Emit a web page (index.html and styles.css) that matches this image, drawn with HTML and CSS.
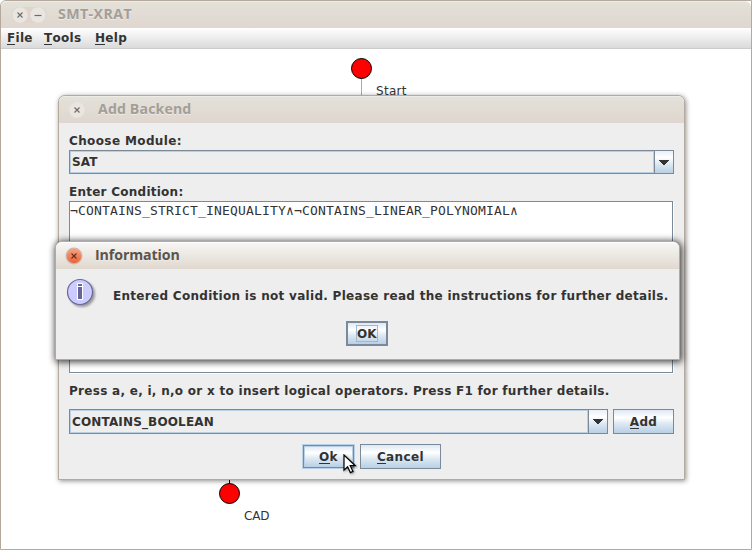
FILE: index.html
```html
<!DOCTYPE html>
<html lang="en">
<head>
<meta charset="utf-8">
<title>SMT-XRAT</title>
<link rel="stylesheet" href="styles.css">
</head>
<body>
<main class="window main-window">
  <header class="titlebar">
    <span class="window-controls">
      <svg class="control" viewBox="0 0 16 16"><circle cx="8" cy="8" r="7.7"/><path d="M5.5 5.5l5 5m0-5l-5 5"/></svg>
      <svg class="control" viewBox="0 0 16 16"><circle cx="8" cy="8" r="7.7"/><path d="M4.5 8.5h7"/></svg>
    </span>
    <span class="title title-main">SMT-XRAT</span>
  </header>
  <nav class="menubar"><span class="m-file"><u>F</u>ile</span><span class="m-tools"><u>T</u>ools</span><span class="m-help"><u>H</u>elp</span></nav>
  <section class="canvas">
    <svg class="graph" viewBox="0 0 750 500">
      <path class="edge" d="M360.5 29v30"/>
      <path class="arrow" d="M227 430h3v1h-1v4h-1v-4h-1z"/>
      <circle cx="360.5" cy="19.5" r="10"/>
      <circle cx="228.5" cy="444.5" r="10"/>
    </svg>
    <span class="node-label start">Start</span>
    <span class="node-label cad">CAD</span>
  </section>
</main>

<section class="window backend-dialog">
  <header class="titlebar">
    <svg class="control" viewBox="0 0 16 16"><circle cx="8" cy="8" r="7.7"/><path d="M5.5 5.5l5 5m0-5l-5 5"/></svg>
    <span class="title title-backend">Add Backend</span>
  </header>
  <div class="form">
    <div class="label t-module">Choose Module:</div>
    <div class="combo module-combo"><span class="value">SAT</span><span class="drop"><svg viewBox="0 0 10 5"><path d="M0 0h10v1h-1v1h-1v1h-1v1h-1v1h-2v-1h-1v-1h-1v-1h-1v-1h-1z"/></svg></span></div>
    <div class="label condition-label">Enter Condition:</div>
    <div class="textarea">¬CONTAINS_STRICT_INEQUALITY∧¬CONTAINS_LINEAR_POLYNOMIAL∧</div>
    <div class="label hint">Press a, e, i, n,o or x to insert logical operators. Press F1 for further details.</div>
    <div class="row">
      <div class="combo operand-combo"><span class="value">CONTAINS_BOOLEAN</span><span class="drop"><svg viewBox="0 0 10 5"><path d="M0 0h10v1h-1v1h-1v1h-1v1h-1v1h-2v-1h-1v-1h-1v-1h-1v-1h-1z"/></svg></span></div>
      <div class="button add"><span><u>A</u>dd</span></div>
    </div>
    <div class="actions">
      <div class="button accept"><span><u>O</u>k</span></div>
      <div class="button cancel"><span><u>C</u>ancel</span></div>
    </div>
  </div>
</section>

<section class="window info-dialog">
  <header class="titlebar">
    <svg class="control close" viewBox="0 0 18 18"><defs><linearGradient id="orange" x2="0" y2="1"><stop stop-color="#f8a080"/><stop offset="1" stop-color="#ea6435"/></linearGradient></defs><circle class="ring" cx="9" cy="9" r="8.5"/><circle class="face" cx="9" cy="9" r="7.2"/><path d="M6.5 6.5l5 5m0-5l-5 5"/></svg>
    <span class="title title-info">Information</span>
  </header>
  <div class="message">
    <svg class="info-icon" viewBox="0 0 32 32"><circle class="info-disc" cx="14" cy="14" r="12.5"/><path class="info-edge" d="M11 5h6v17h-6z"/><path class="info-i" d="M12 6h4v2h-4zM12 9h4v12h-4z"/></svg>
    <span class="message-text">Entered Condition is not valid. Please read the instructions for further details.</span>
  </div>
  <div class="button confirm"><span class="focus">OK</span></div>
</section>
<svg class="cursor" viewBox="0 0 14 20"><path d="M1 1v15.2l3.6-3.5 2.8 5.9 2.6-1.2-2.8-5.7h5.1z"/></svg>
</body>
</html>
```
FILE: styles.css
```css
* { box-sizing: border-box; }
body {
  margin: 0; width: 752px; height: 550px; overflow: hidden; background: #fff;
  font: bold 12px/16px "DejaVu Sans", sans-serif; letter-spacing: .285px; color: #333;
}
span { white-space: nowrap; }
svg { display: block; flex: none; }
u { text-decoration: none; border-bottom: 1px solid #333; display: inline-block; height: 15px; }

.window { position: absolute; border: 1px solid #b5a99d; background: #eee; }
.titlebar {
  display: flex; align-items: center; height: 27px; border-top: 1px solid #eeece6;
  border-radius: 6px 6px 0 0; background: linear-gradient(#e3e1d9, #dfd6cf);
}
.title { margin-top: -2px; font: bold 14.2px/18px "Open Sans", "Noto Sans", sans-serif; letter-spacing: 0; color: #a39e98; text-shadow: 0 1px #eeeae5; }
.control { width: 16px; height: 16px; fill: #e9e6e1; }
.control path { fill: none; stroke: #716c67; stroke-width: 1.2; }

.main-window { inset: 0; background: #fff; border-radius: 6px 0 0 0; }
.window-controls { display: flex; gap: 2px; margin-left: 10px; padding: 0 1px; border-radius: 9px; background: #dfd5cc; }
.title-main { margin-left: 11px; letter-spacing: .4px; }
.menubar { display: flex; height: 21px; padding: 2px 0 0 6px; border-bottom: 1px solid #ccc; background: linear-gradient(#fff, #dadada); }
.m-file { width: 37px; } .m-tools { width: 51px; }
.canvas { position: relative; height: 499px; }
.graph { width: 750px; height: 500px; }
.graph circle { fill: red; stroke: #000; }
.edge { stroke: #aaa; }
.arrow { fill: #000; }
.node-label { position: absolute; font: 12px/14px "DejaVu Sans", sans-serif; }
.start { left: 375px; top: 35px; }
.cad { left: 243px; top: 460px; letter-spacing: -.2px; }

.backend-dialog { left: 58px; top: 95px; width: 627px; height: 385px; border-radius: 7px 7px 0 0; box-shadow: 1px 1px 5px rgba(0,0,0,.45); }
.backend-dialog .titlebar .control { margin-left: 10px; }
.title-backend { margin-left: 13px; letter-spacing: .1px; }
.form { display: flex; flex-direction: column; padding: 10px 10px 0; }
.label { height: 16px; margin-bottom: 1px; white-space: nowrap; }
.t-module { letter-spacing: .38px; }
.combo { display: flex; border: 1px solid #7a8a99; letter-spacing: .15px; }
.module-combo { height: 24px; }
.value { flex: 1; display: flex; align-items: center; padding-left: 1px; border: 1px solid #b8cfe5; }
.drop { width: 19px; display: flex; align-items: center; justify-content: center; border-left: 1px solid #7a8a99; background: linear-gradient(#e8f0f7, #fff 30%, #dce8f2 60%, #b8cfe5); }
.drop svg { width: 10px; height: 5px; fill: #333; }
.condition-label { margin-top: 10px; letter-spacing: .25px; }
.textarea { width: 604px; height: 172px; padding: 1px 0; border: 1px solid #7a8a99; background: #fff; font: 13px/16px "DejaVu Sans Mono", monospace; letter-spacing: .173px; box-shadow: 1px 1px #fff; }
.hint { margin: 10px 0; }
.row { display: flex; gap: 5px; height: 25px; }
.operand-combo { width: 539px; }
.button { display: flex; align-items: center; justify-content: center; border: 1px solid #7a8a99; background: linear-gradient(#dde8f3, #fff 33%, #dce8f2 60%, #b8cfe5); }
.add { width: 61px; }
.actions { display: flex; gap: 5px; height: 25px; margin: 10px 0 0 233px; }
.accept { width: 51px; height: 23px; margin: 1px 1px 0; box-shadow: inset 0 0 0 1px #b8cfe5, 0 0 0 1px #b8cfe5; }
.cancel { width: 81px; letter-spacing: .4px; }

.info-dialog { left: 55px; top: 241px; width: 625px; height: 119px; border-radius: 7px 7px 0 0; box-shadow: 1px 1px 7px 1px rgba(0,0,0,.75); }
.info-dialog .titlebar { background: linear-gradient(#f7f6f3, #dfd8cf); border-top-color: #fff; }
.close { width: 18px; height: 18px; margin-left: 9px; }
.close .ring { fill: #d5b5a5; }
.close .face { fill: url(#orange); }
.close path { stroke: #60301f; }
.title-info { margin-left: 12px; letter-spacing: -.1px; color: #5a544d; }
.message { display: flex; height: 52px; padding: 9px 0 0 10px; }
.info-icon { width: 32px; height: 32px; margin-right: 15px; }
.info-disc { fill: #ccf; stroke: #669; stroke-width: 1.2; filter: drop-shadow(2px 2px 1px rgba(0,0,0,.35)); }
.info-edge { fill: #fff; }
.info-i { fill: #669; }
.message-text { padding-top: 10px; letter-spacing: .295px; }
.confirm { width: 42px; height: 25px; margin: 0 auto 0 290px; border-width: 2px; }
.focus { width: 22px; height: 17px; border: 1px solid #a3b8cc; line-height: 17px; letter-spacing: .1px; }
.cursor { position: absolute; left: 343px; top: 454px; width: 14px; height: 20px; fill: #fff; stroke: #000; stroke-width: 1.2; filter: drop-shadow(1px 1px 1px rgba(0,0,0,.4)); }
```
